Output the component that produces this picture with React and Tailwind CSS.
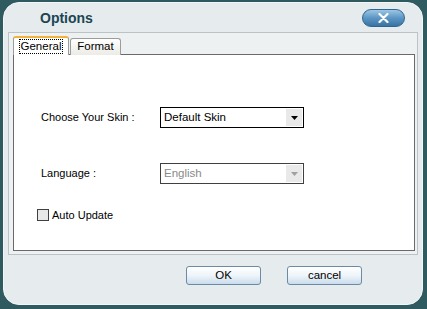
import React from 'react';

function Select({ value, disabled }) {
    return (
        <div
            className={`flex h-[21px] w-[144px] items-stretch border bg-white ${disabled ? 'border-[#404040]' : 'border-black'}`}
        >
            <div className={`flex flex-1 items-center pl-[3px] text-[11.5px] ${disabled ? 'text-[#8a8a8a]' : 'text-black'}`}>
                {value}
            </div>
            <div className="m-[1px] flex w-[16px] items-center justify-center bg-[#e9e9e9]">
                <svg width="7" height="4" viewBox="0 0 7 4">
                    <path d="M0 0h7L3.5 4z" fill={disabled ? '#a0a0a0' : '#000'} />
                </svg>
            </div>
        </div>
    );
}

function Button({ children }) {
    return (
        <button
            type="button"
            className="h-[19px] w-[75px] rounded-[3px] border border-[#6c8aa3] bg-gradient-to-b from-[#ffffff] via-[#eef4f9] to-[#c9dcec] text-[11.5px] leading-none text-black"
        >
            {children}
        </button>
    );
}

export default function App() {
    return (
        <div
            className="h-[309px] w-[427px] overflow-hidden bg-[#2f5a5f] pl-[3px] pr-[4px] pt-[2px]"
            style={{ fontFamily: '"Liberation Sans", Arial, sans-serif' }}
        >
            <div className="flex h-[303px] flex-col rounded-[16px] border border-[#f3f6f7] bg-[#e6ecee]">
                {/* title bar */}
                <div className="flex h-[28px] items-start justify-between pl-[36px] pr-[17px] pt-[6px]">
                    <span className="text-[14px] font-bold leading-[18px] text-[#1c4652]">Options</span>
                    <div className="flex h-[18px] w-[43px] items-center justify-center rounded-full border border-[#2f6590] bg-gradient-to-b from-[#9cc6e4] via-[#5b96c4] to-[#3a73a2]">
                        <svg width="11" height="10" viewBox="0 0 11 10">
                            <path d="M1.5 1l8 8M9.5 1l-8 8" stroke="#fff" strokeWidth="2.2" strokeLinecap="round" />
                        </svg>
                    </div>
                </div>

                {/* tab frame */}
                <div className="ml-[4px] mr-[4px] mt-[1px] flex h-[223px] flex-col border border-[#bcc3c6] bg-[#eef1f2] pb-[3px] pl-[4px] pr-[2px] pt-[3px]">
                    <div className="relative z-10 flex h-[19px] items-end">
                        <div className="flex h-[19px] w-[56px] items-center justify-center rounded-t-[3px] border-x border-t-2 border-x-[#9c9c9c] border-t-[#f2b33d] bg-white">
                            <span className="border border-dotted border-black px-[1px] text-[11.5px] leading-[13px] text-black">General</span>
                        </div>
                        <div className="ml-[1px] flex h-[17px] w-[51px] items-center justify-center rounded-t-[3px] border-x border-t border-[#9c9c9c] bg-gradient-to-b from-[#ffffff] to-[#ecebe5] text-[11.5px] text-black">
                            Format
                        </div>
                    </div>
                    <div className="-mt-[1px] flex flex-1 flex-col border border-[#6a6a6a] bg-white pl-[27px]">
                        <div className="mt-[52px] flex items-center">
                            <span className="w-[119px] text-[11px] text-black">Choose Your Skin :</span>
                            <Select value="Default Skin" />
                        </div>
                        <div className="mt-[35px] flex items-center">
                            <span className="w-[119px] text-[11px] text-black">Language :</span>
                            <Select value="English" disabled />
                        </div>
                        <div className="mt-[23px] flex items-center">
                            <span className="-ml-[4px] h-[12px] w-[12px] border border-[#404040] bg-[#e8e8e8]" />
                            <span className="ml-[3px] text-[11px] text-black">Auto Update</span>
                        </div>
                    </div>
                </div>

                {/* buttons */}
                <div className="mt-[11px] flex justify-end gap-[26px] pr-[60px]">
                    <Button>OK</Button>
                    <Button>cancel</Button>
                </div>
            </div>
        </div>
    );
}
